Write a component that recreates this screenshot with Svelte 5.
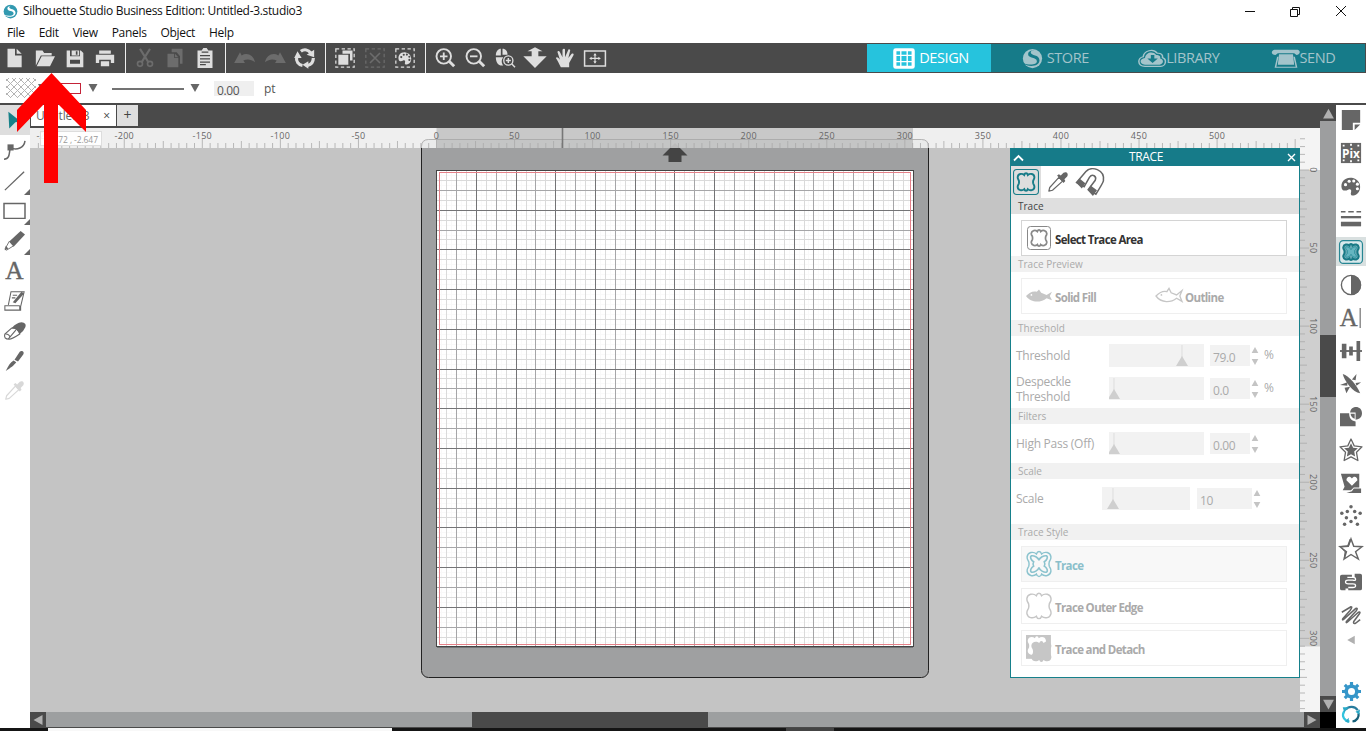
<!--
@component
Design workspace of a cutting machine editor: menu and tool bars, rulers, cutting mat
and the floating Trace panel.
-->

<script lang="ts">
	const MENUS = ['File', 'Edit', 'View', 'Panels', 'Object', 'Help'];

	const TOOL_GROUPS = [
		[{ icon: 'page' }, { icon: 'open' }, { icon: 'save' }, { icon: 'print' }],
		[{ icon: 'cut', off: true }, { icon: 'copy', off: true }, { icon: 'paste' }],
		[{ icon: 'undo', off: true }, { icon: 'redo', off: true }, { icon: 'cycle' }],
		[{ icon: 'selectAll' }, { icon: 'deselect', off: true }, { icon: 'selectColor' }],
		[{ icon: 'zoomIn' }, { icon: 'zoomOut' }, { icon: 'zoomArea' }, { icon: 'zoomDrag' }, { icon: 'hand' }, { icon: 'fit' }]
	];

	const LEFT_TOOLS = ['select', 'bezier', 'line', 'rect', 'pencil', 'text', 'sketch', 'eraser', 'knife', 'dropperOff'];
	const FLYOUTS = ['line', 'rect', 'pencil'];

	const RIGHT_TOOLS = [
		'pageSetup', 'pix', 'palette', 'lines', 'trace', 'contrast', 'textStyle', 'align', 'replicate',
		'modify', 'offset', 'library', 'stipple', 'star', 'puzzle', 'sketchPen'
	];

	const MODES = [
		{ label: 'DESIGN', icon: 'grid', width: 22 },
		{ label: 'STORE', icon: 'logo', width: 21 },
		{ label: 'LIBRARY', icon: 'cloud', width: 28 },
		{ label: 'SEND', icon: 'send', width: 28 }
	];

	const UNIT = 1.5612;
	const ORIGIN_X = 436.5;
	const ORIGIN_Y = 170;
	const MAT = 476.5;

	function ticks(from: number, to: number) {
		return Array.from({ length: (to - from) / 5 + 1 }, (_, i) => from + i * 5);
	}

	function tickSize(n: number) {
		return n % 50 === 0 ? 9 : n % 25 === 0 ? 7 : 5;
	}

	const X_TICKS = ticks(-255, 550);
	const Y_TICKS = ticks(-20, 345);
	const GRID = Array.from({ length: 97 }, (_, i) => i);

	function gridColor(i: number) {
		if (i % 8 === 0) return '#747476';
		if (i % 4 === 0) return '#a6a6a8';
		return i % 2 === 0 ? '#dadada' : '#f9f9f9';
	}

	const BUTTERFLY =
		'M12 3.2Q10.7 3.2 10.2 4.9C8 3 4 3.500 3.600 7C3.500 9 4.500 9.500 4.800 10.500Q5.200 12 4.800 13.500C4.500 14.500 3.500 15 3.600 17C4 20.500 8 21 10.200 19.100Q10.700 20.800 12 20.800Q13.300 20.800 13.800 19.100C16 21 20 20.500 20.400 17C20.500 15 19.500 14.500 19.200 13.500Q18.800 12 19.200 10.500C19.500 9.500 20.500 9 20.400 7C20 3.500 16 3 13.800 4.900Q13.300 3.200 12 3.200Z';
	const INNER =
		'M12 9.500C11.500 7.500 8.500 6 6.800 6.300 5.500 7 6.500 9.500 8.300 10.500Q7.500 12 8.300 13.500C6.500 14.500 5.500 17 6.800 17.700 8.500 18 11.500 16.500 12 14.500 12.500 16.500 15.500 18 17.200 17.700 18.500 17 17.500 14.500 15.700 13.500Q16.500 12 15.700 10.500C17.500 9.500 18.500 7 17.200 6.300 15.500 6 12.500 7.500 12 9.500Z';
	const SWIRL = '<circle cx="12" cy="12" r="11" fill="currentColor"/><path d="M17 3c-4-1-10 0-10 4 0 5 10 3 10 8 0 4-8 5-16 2 5 5 19 5 19-3 0-7-10-5-10-9 0-2 3-3 7-2Z" fill="var(--cutout)"/>';
	const PALETTE = '<path d="M13 3C5 2 0 8 2 15c1 3 5 2 7 1s4 0 3 3 1 4 4 3c8-2 9-17-3-19Z" fill="currentColor"/><g fill="var(--cutout)"><circle cx="6" cy="10.500" r="1.700"/><circle cx="10" cy="6.800" r="1.700"/><circle cx="15" cy="6.500" r="1.700"/><circle cx="19" cy="10" r="1.700"/><circle cx="19" cy="15" r="1.700"/></g>';
	const DROPPER = '<path d="M2 22l1-4L13 7l4 4L6 21Z" fill="none" stroke="currentColor" stroke-width="1.300" stroke-linejoin="round"/><path d="M11 5l2-1.500L15 5l3-3c3-2 6 1 4 4l-3 3 1 2-2 2Z" fill="currentColor"/>';

	// All glyphs are drawn in a 24 x 24 box.
	const ICONS: Record<string, string> = {
		page: '<path d="M3 1h9v8h8v14H3ZM14 1l6 6h-6Z" fill="currentColor"/>',
		open: '<path d="M1 21V3h8l2 3h9v3H7L1 21ZM8 10h16l-6 12H2Z" fill="currentColor"/>',
		save: '<path d="M2 3h4v7h12V3h1l3 3v17H2Zm4 11v5h12v-5ZM8 3h9v6H8Zm5 1v4h2V4Z" fill="currentColor" fill-rule="evenodd"/>',
		print: '<path d="M5 3h14v4H5ZM1 8h22v10h-4v-4H5v4H1ZM7 16h10v6H7Z" fill="currentColor"/>',
		cut: '<path d="M6 1l10 16M18 1L8 17" stroke="currentColor" stroke-width="2.500"/><g fill="none" stroke="currentColor" stroke-width="2"><circle cx="6" cy="19" r="3"/><circle cx="18" cy="19" r="3"/></g>',
		copy: '<path d="M3 7h8v5h5v11H3ZM12 7l4 4h-4ZM8 1h13v18h-3v-9l-4-5H8Z" fill="currentColor"/>',
		paste: '<path d="M3 3h5l2-3h4l2 3h5v21H3Z" fill="currentColor"/><path d="M6 9h12M6 13h12M6 17h12M6 20h7M8 5h8" stroke="var(--cutout)" stroke-width="1.500"/>',
		undo: '<path d="M-1 18L6 5l2 4c6-4 14-1 16 8-5-4-10-4-14-2l2 3Z" fill="currentColor"/>',
		redo: '<path d="M25 18L18 5l-2 4C10 5 2 8 0 17c5-4 10-4 14-2l-2 3Z" fill="currentColor"/>',
		cycle: '<g fill="none" stroke="currentColor" stroke-width="3.800"><path d="M7 4c4-3 9-2 12 2M22 12c0 5-3 8-7 9M9 21c-5-1-8-5-7-10"/></g><path d="M23 2v9l-9-3ZM16 16v9l-7-5ZM-1 12l4-8 5 8Z" fill="currentColor"/>',
		selectAll: '<path d="M1 1h22v22H1Z" fill="none" stroke="currentColor" stroke-width="1.500" stroke-dasharray="4 3"/><path d="M9 3h12v12h-3V7H9ZM4 8h12v12H4Z" fill="currentColor"/>',
		deselect: '<path d="M1 1h22v22H1Z" fill="none" stroke="currentColor" stroke-width="1.500" stroke-dasharray="4 3"/><path d="M6 6l12 12M18 6L6 18" stroke="currentColor" stroke-width="2"/>',
		selectColor: '<path d="M1 1h22v22H1Z" fill="none" stroke="currentColor" stroke-width="1.500" stroke-dasharray="4 3"/><g transform="translate(3 3) scale(.75)">' + PALETTE + '</g>',
		zoomIn: '<circle cx="10.500" cy="10" r="8.700" fill="none" stroke="currentColor" stroke-width="2.300"/><path d="M6 10h9M10.500 5.500v9" stroke="currentColor" stroke-width="2.200"/><path d="M17 16l6 6" stroke="currentColor" stroke-width="3.500"/>',
		zoomOut: '<circle cx="10.500" cy="10" r="8.700" fill="none" stroke="currentColor" stroke-width="2.300"/><path d="M6 10h9" stroke="currentColor" stroke-width="2.200"/><path d="M17 16l6 6" stroke="currentColor" stroke-width="3.500"/>',
		zoomArea: '<path d="M1 9C1 4 4 1 7 1v8ZM9 1c4 0 6 3 6 7H9ZM1 11h9c-3 4-2 7 0 10C4 22 1 17 1 11Z" fill="currentColor"/><circle cx="16" cy="15" r="5.500" fill="none" stroke="currentColor" stroke-width="1.600"/><path d="M13 15h6M16 12v6M20 19l4 4" stroke="currentColor" stroke-width="1.800"/>',
		zoomDrag: '<path d="M12-1l9 5h-5v6h10L12 24-2 10H8V4H3Z" fill="currentColor"/>',
		hand: '<path d="M7 23C5 19 3 15 1 12c1-2 3-1 5 2L3 5c0-2 2-2 3 0l3 6V2c1-2 3-1 3 0v9l4-9c1-1 3 0 2 2l-2 8 4-5c2-1 3 0 2 2l-5 9v5H8Z" fill="currentColor"/>',
		fit: '<path d="M-.5 3.500h25v18h-25Z" fill="none" stroke="currentColor" stroke-width="1.800"/><path d="M7 12.500h10M12 7.500v10" stroke="currentColor" stroke-width="1.400"/><path d="M12 6l2 3h-4ZM12 19l2-3h-4ZM5 12.500l3-2v4ZM19 12.500l-3-2v4Z" fill="currentColor"/>',
		grid: '<rect x="2" y="2" width="20" height="20" rx="1" fill="none" stroke="currentColor" stroke-width="3.500"/><path d="M8.500 2v20M15.500 2v20M2 8.500h20M2 15.500h20" stroke="currentColor" stroke-width="1.500"/>',
		logo: SWIRL,
		cloud: '<path d="M6 21C-1 20.500-.5 11 4.500 10 5 3 13 0 16.500 6 20 5.500 21.500 8.500 21 11c4 2 3 9.500-1.500 10Z" fill="none" stroke="currentColor" stroke-width="1.300"/><path d="M6 19C1 18.500 1 12 6 11.500 6.500 5 13 3 15.500 8c3 0 4 2 3.500 4 3.500 1 3 6.500-.5 7Z" fill="currentColor"/><path d="M11 8h3v4h3l-4.500 5L8 12h3Z" fill="var(--cutout)"/>',
		send: '<path d="M2 2h20c3 1 2 6-1 6l-2-2H5L3 8C-1 8-1 3 2 2Z" fill="currentColor"/><path d="M6 7h12l1 12H5Z" fill="currentColor"/><path d="M5 10L3 22h18l-2-12" fill="none" stroke="currentColor" stroke-width="1.300"/>',
		select: '<path d="M5 2l14 11-6 1-7 7Z" fill="#178189"/>',
		bezier: '<path d="M0 22c6 0 6-5 7-13 8 3 16 0 17-8" fill="none" stroke="currentColor" stroke-width="1.700"/><path d="M4 5h7v7H4Z" fill="currentColor"/>',
		line: '<path d="M1 23L23 2" stroke="currentColor" stroke-width="1.500"/>',
		rect: '<path d="M0 4h24v17H0Z" fill="none" stroke="currentColor" stroke-width="1.700"/>',
		pencil: '<path d="M6 13L19 1l5 4-13 14Z" fill="currentColor"/><path d="M6 13l5 5-8 5-2-1Z" fill="none" stroke="currentColor"/><path d="M1 23l1-5 3 3Z" fill="currentColor"/>',
		text: '<text x="12" y="22" text-anchor="middle" font-family="Liberation Serif, serif" font-size="29" fill="currentColor" stroke="currentColor" stroke-width=".5">A</text>',
		sketch: '<path d="M5 17l3-15h15l-4 17v4H1v-5h17M18 23v-5M10 6h5M9 9h4" fill="none" stroke="currentColor" stroke-width="1.200"/><path d="M10 14l10-12 3 2-10 11Z" fill="currentColor"/>',
		eraser: '<path d="M9 9Q14 3 20 2.500 26 3 24.500 8 23 12 18 16 16 10 9 9Z" fill="currentColor"/><path d="M9 9L1 16Q-1 22 6 22 9 22 18 16 16 9 9 9M13.500 11.500L5 21.500M2 16q4 0 5 4" fill="none" stroke="currentColor" stroke-width="1.300"/>',
		knife: '<path d="M12 11l6-9c2-2 6 0 4 3l-6 8ZM11 12l3 2c-3 4-6 6-12 10 3-6 5-10 9-12Z" fill="currentColor"/>',
		dropperOff: '<g opacity=".25">' + DROPPER + '</g>',
		dropper: DROPPER,
		magnet: '<path d="M.5 12.500L8.500 3C13-2 25 1 23.500 11Q23 13 17 22.500L10.500 18.500 16.500 10.500C18 7 14 4.500 11.500 8L7 16Z" fill="none" stroke="currentColor" stroke-width="1.300"/><path d="M0 12.500L3 9l5 4-3 4.500ZM10 19l2.500-4 5.500 4-3.500 5Z" fill="currentColor"/>',
		pageSetup: '<path d="M2 1h20v14h-8v8H2ZM16 17h6l-6 6Z" fill="currentColor"/>',
		pix: '<path d="M1 1h22v22H1Z" fill="currentColor"/><path d="M3 3h2v2H3zM11 2h2v2h-2zM19 3h2v2h-2zM3 19h2v2H3zM11 20h2v2h-2zM19 19h2v2h-2z" fill="#fff"/><text x="12" y="17" text-anchor="middle" font-family="Open Sans, sans-serif" font-size="13" font-weight="700" fill="#fff">Pix</text>',
		palette: PALETTE,
		lines: '<path d="M1 4h5M9 4h6M18 4h5" stroke="currentColor" stroke-width="1.600"/><path d="M1 10h22" stroke="currentColor" stroke-width="2.500"/><path d="M1 17.500h22" stroke="currentColor" stroke-width="5"/>',
		trace: `<rect x="-.5" y="-.5" width="25" height="25" rx="4" fill="#d9e9ec" stroke="#278693" stroke-width="1.300"/><path d="${BUTTERFLY}" fill="#68aab5" stroke="#187985" stroke-width="2.200"/><path d="${INNER}" fill="#65b5c0" stroke="#2f929e" stroke-width="1"/>`,
		contrast: '<circle cx="12" cy="12" r="10.500" fill="none" stroke="currentColor" stroke-width="1.500"/><path d="M12 1a11 11 0 0 1 0 22Z" fill="currentColor"/>',
		textStyle: '<text x="9.500" y="21" text-anchor="middle" font-family="Liberation Serif, serif" font-size="27" fill="currentColor" stroke="currentColor" stroke-width=".4">A</text><path d="M22 1v22" stroke="currentColor" stroke-width="1.200"/>',
		align: '<path d="M0 12h24" stroke="currentColor" stroke-width="2"/><path d="M2 4h5v16H2ZM10 7h4v10h-4ZM18 1h4v22h-4Z" fill="currentColor"/>',
		replicate: '<path d="M3 1C10 3 19 14 22 22 14 21 5 9 3 1Z" fill="currentColor"/><path d="M13 7l5-6-1 7ZM17 11l6-1-5 4ZM8 10L0 13l8 1ZM11 15l-4 7-2-6Z" fill="currentColor"/>',
		modify: '<path d="M0 8h10c0 5 2 8 7 9v5H0Z" fill="currentColor"/><path d="M11 7c1-8 13-8 13 1 0 5-4 7-7 7V7Z" fill="currentColor"/><path d="M11.500 8.500H16V14c-3-1-4-3-4.500-5.500Z" fill="currentColor"/>',
		offset: '<path d="M12 0l3.500 7.500 8.500 1-6 6 1.500 9L12 19.500 4.500 23.500 6 14.500 0 8.500l8.500-1Z" fill="none" stroke="currentColor" stroke-width="1.400" stroke-linejoin="round"/><path d="M12 4.500l2.300 5 5.200.700-4 3.500 1 5.300L12 16.500 7.500 19l1-5.300-4-3.500 5.200-.700Z" fill="currentColor"/>',
		library: '<path d="M1 2h20v15h-6l-3 3H3l2-4Z" fill="currentColor"/><path d="M15 18h8v5H7l6-2Z" fill="currentColor"/><path d="M13 15L7 9c0-4 4-5 6-2 2-3 6-2 6 2Z" fill="#fff"/>',
		stipple: '<g fill="currentColor"><circle cx="12" cy="2" r="1.900"/><circle cx="2" cy="9" r="1.900"/><circle cx="8" cy="7" r="1.900"/><circle cx="16" cy="7" r="1.900"/><circle cx="22" cy="9" r="1.900"/><circle cx="7" cy="14" r="1.900"/><circle cx="17" cy="14" r="1.900"/><circle cx="12" cy="18" r="1.900"/><circle cx="5" cy="21" r="1.900"/><circle cx="19" cy="21" r="1.900"/></g>',
		star: '<path d="M12 1l3 8 9 .5-7 5.500 3 8-8-5-7.500 5L7 15 0 9.500 9 9Z" fill="none" stroke="currentColor" stroke-width="1.600"/><path d="M10.500 1h2L9.500 9.500 0 10l7 5-2 8-1-1 1-7-6-6 9-1Z" fill="currentColor"/>',
		puzzle: '<path d="M2 4h11v3h3V3h6q2 0 2 2v14q0 2-2 2H9v-2H6v2H2q-2 0-2-2V6q0-2 2-2Z" fill="currentColor"/><path d="M8 7h6q3 0 3 2t-3 1H9q-3 0-3 2t3 2h5q3 0 3 2t-3 2H9" fill="none" stroke="#fff" stroke-width="1.400"/>',
		sketchPen: '<path d="M2 9L12 3Q14 3 11 7L3 16Q2 19 6 15L17 5Q20 4 18 7L7 19Q6 22 10 18L20 9Q23 8 21 11L15 19Q14 22 17 21L22 17" fill="none" stroke="currentColor" stroke-width="1.700" stroke-linejoin="round"/>',
		gear: '<circle cx="12" cy="12" r="6.700" fill="none" stroke="#3696c9" stroke-width="4.500"/><path d="M12 0v5M12 19v5M0 12h5M19 12h5M3.500 3.500l3.500 3.500M17 17l3.500 3.500M20.500 3.500L17 7M7 17l-3.500 3.500" stroke="#3696c9" stroke-width="4"/>',
		sync: '<path d="M5 6c4-5 12-5 16 1" fill="none" stroke="#287c9e" stroke-width="3"/><path d="M3 8c-4 7 0 13 7 14" fill="none" stroke="#31c4df" stroke-width="3"/><path d="M14 22c6-1 9-6 8-11" fill="none" stroke="#155f78" stroke-width="3"/><path d="M1 3h8l-6 7ZM9 17v7l-5-2ZM24 6l-1 7-5-4Z" fill="#2aa9c7"/>',
		traceTab: `<rect x=".5" y=".5" width="23" height="23" rx="3" fill="none" stroke="currentColor" stroke-width="1"/><path d="${BUTTERFLY}" transform="translate(1 1) scale(.92)" fill="none" stroke="currentColor" stroke-width="1.900"/>`,
		fish: '<path d="M0 12c3-3 6-5 10-4l2-2 2 3 5 2 5-3-2 4 2 4-5-2c-5 4-14 5-19-2Z" fill="currentColor"/><circle cx="5" cy="11" r=".8" fill="#fff"/>',
		fishLine: '<path d="M0 12c3-3 6-5 10-4l2-3 2 4 5 2 5-4-2 5 2 5-5-3c-5 4-14 5-19-2Z" fill="none" stroke="currentColor" stroke-width="1.200"/><circle cx="5" cy="11" r=".8" fill="currentColor"/>',
		traceStyle: `<path d="${BUTTERFLY}" transform="translate(-3.700 -3.700) scale(1.310)" fill="none" stroke="currentColor" stroke-width="1"/><path d="${INNER}" transform="translate(-4 -4) scale(1.330)" fill="none" stroke="currentColor" stroke-width="1.100"/>`,
		outer: `<path d="${BUTTERFLY}" transform="translate(-4 -4) scale(1.330)" fill="none" stroke="currentColor" stroke-width="1"/>`,
		detach: `<path d="M0 0h23v22H0Z" fill="currentColor"/><path d="${BUTTERFLY}" transform="translate(-2 -2)" fill="#fff"/><path d="${BUTTERFLY}" transform="translate(1 2) scale(1.100)" fill="currentColor"/>`,
		up: '<path d="M12 3l10 18H2Z" fill="currentColor"/>',
		down: '<path d="M2 3h20L12 21Z" fill="currentColor"/>',
		left: '<path d="M3 12L21 2v20Z" fill="currentColor"/>',
		right: '<path d="M21 12L3 2v20Z" fill="currentColor"/>'
	};
</script>

{#snippet icon(name: string, size: number)}
	<svg class="icon" viewBox="0 0 24 24" width={size} height={size}>{@html ICONS[name]}</svg>
{/snippet}

{#snippet slider(label: string, value: string, knob: number, unit = '', wide = false)}
	<div class="setting" class:wide>
		<span class="setting-label">{label}</span>
		<svg class="slider" viewBox={wide ? '0 0 88 23' : '0 0 95 23'}>
			<path d="M{knob} 1v12" stroke="#ddd" />
			<path d="M{knob} 12l6 10h-12Z" fill="#cfcfcf" />
		</svg>
		<span class="field">{value}</span>
		<span class="spinner">{@render icon('up', 8)}{@render icon('down', 8)}</span>
		<span class="unit">{unit}</span>
	</div>
{/snippet}

<div class="window">
	<header class="titlebar">
		<span class="app-logo">{@render icon('logo', 15)}</span>
		<span class="title">Silhouette Studio Business Edition: Untitled-3.studio3</span>
		<svg class="controls" width="110" height="22" viewBox="0 0 110 22" fill="none" stroke="#111">
			<path d="M1 10.500h10M46.500 8.500h7v7h-7ZM48.500 8.500v-2h7v7h-2M92 5l10 10M102 5L92 15" />
		</svg>
	</header>

	<nav class="menubar">
		{#each MENUS as menu}<span>{menu}</span>{/each}
	</nav>

	<div class="toolbar">
		{#each TOOL_GROUPS as group}
			<div class="group">
				{#each group as tool}
					<span class="tool" class:off={tool.off}>{@render icon(tool.icon, 20)}</span>
				{/each}
			</div>
		{/each}
		<div class="modes">
			{#each MODES as mode, i}
				<span class="mode" class:active={i === 0} class:tight={i > 1}>
					<svg class="icon" viewBox="0 0 24 24" width={mode.width} height="21" preserveAspectRatio="none">{@html ICONS[mode.icon]}</svg>
					{mode.label}
				</span>
			{/each}
		</div>
	</div>

	<div class="options">
		<svg width="205" height="30" viewBox="0 0 205 30">
			<defs>
				<pattern id="hatch" width="7" height="7" patternUnits="userSpaceOnUse">
					<path d="M0 0l7 7M7 0L0 7" stroke="#b4b4b4" />
				</pattern>
			</defs>
			<rect x="6" y="5" width="30" height="20" fill="url(#hatch)" />
			<path d="M38 11h9l-4.500 8ZM88.500 11h9L93 19ZM190.500 11h9L195 19Z" fill="#666" />
			<rect x="52.500" y="10.500" width="28" height="10" fill="none" stroke="#c42338" />
			<path d="M112 16h72" stroke="#444" stroke-width="1.600" />
		</svg>
		<span class="width-field">0.00</span>
		<span class="pt">pt</span>
	</div>

	<main class="workspace">
		<aside class="left-tools">
			{#each LEFT_TOOLS as tool, i}
				<span class="left-tool" class:active={i === 0}>
					{@render icon(tool, 21)}
					{#if FLYOUTS.includes(tool)}<i class="flyout"></i>{/if}
				</span>
			{/each}
		</aside>

		<section class="center">
			<div class="tabs">
				<div class="tab">Untitled-3 <b>×</b></div>
				<div class="tab-add">+</div>
			</div>

			<svg class="canvas" viewBox="30 128 1290 584" width="1290" height="584">
				<rect x="421.500" y="139.500" width="507" height="538" rx="7" fill="#9fa0a1" stroke="#222" />
				<rect x={ORIGIN_X} y={ORIGIN_Y + 0.5} width={MAT} height="476" fill="#fff" />
				<g shape-rendering="crispEdges">
					{#each [1, 2, 4, 8] as level}
						{#each GRID.filter((i) => i % level === 0 && (level === 8 || i % (level * 2) !== 0)) as i}
							{@const POS = (i * MAT) / 96}
							<path d="M{ORIGIN_X + POS + 0.2} 171V646M437 {ORIGIN_Y + 0.5 + POS}H913" stroke={gridColor(i)} />
						{/each}
					{/each}
				</g>
				<rect x={ORIGIN_X} y={ORIGIN_Y + 0.5} width={MAT + 0.5} height="476" fill="none" stroke="#444" />
				<rect x="439.500" y="172.500" width="471" height="472" fill="none" stroke="#e58088" />
				<path d="M675 143l12.500 12.500h-6v6.500h-13v-6.500h-6Z" fill="#444" />

				<rect x="30" y="128" width="1270" height="20" fill="#f5f5f5" fill-opacity=".88" />
				<rect x={ORIGIN_X} y="128" width={MAT} height="20" fill="#000" fill-opacity=".16" />
				<path d="M421.500 148v-1.500q0-7 7-7h493q7 0 7 7v1.500" fill="none" stroke="#aaa" stroke-width=".8" />
				<g class="ruler">
					{#each X_TICKS as n}
						{@const X = ORIGIN_X + n * UNIT}
						<path d="M{X} 148v-{tickSize(n)}" />
						{#if n % 50 === 0 && n < 550}<text x={X} y="139">{n}</text>{/if}
					{/each}
				</g>
				<path d="M562.500 128v20" stroke="#777" stroke-width="1.600" />

				<rect x="1300" y="128" width="20" height="584" fill="#f4f4f4" />
				<rect x="1300" y={ORIGIN_Y} width="20" height={MAT} fill="#cfcfcf" />
				<g class="ruler">
					{#each Y_TICKS as n}
						{@const Y = ORIGIN_Y + n * UNIT}
						<path d="M1300 {Y}h{tickSize(n)}" />
						{#if n % 50 === 0}<text transform="translate(1309.500 {Y}) rotate(90)">{n}</text>{/if}
					{/each}
				</g>

				<rect x="40.500" y="131.500" width="61" height="14" fill="#fff" fill-opacity=".92" stroke="#ddd" />
				<text class="coords" x="44" y="143" textLength="54">-9.172 , -2.647</text>
			</svg>

			<div class="hscroll">
				<span class="arrow">{@render icon('left', 12)}</span>
				<span class="track"><i></i></span>
				<span class="arrow">{@render icon('right', 12)}</span>
			</div>

			<div class="panel">
				<div class="panel-title">
					<svg width="11" height="8" viewBox="0 0 11 8"><path d="M1 6.500l4.500-4.500L10 6.500" fill="none" stroke="#fff" stroke-width="1.800" /></svg>
					<span>TRACE</span>
					<svg width="9" height="9" viewBox="0 0 9 9"><path d="M1 1l7 7M8 1L1 8" stroke="#fff" stroke-width="1.400" /></svg>
				</div>
				<div class="panel-tabs">
					<span class="panel-tab active">{@render icon('traceTab', 26)}</span>
					<span class="panel-tab">{@render icon('dropper', 22)}</span>
					<span class="panel-tab">{@render icon('magnet', 28)}</span>
				</div>
				<h2 class="on">Trace</h2>
				<div class="box area">{@render icon('traceTab', 24)}<b>Select Trace Area</b></div>
				<h2>Trace Preview</h2>
				<div class="box preview">
					<span>{@render icon('fish', 26)}<b>Solid Fill</b></span>
					<span>{@render icon('fishLine', 26)}<b>Outline</b></span>
				</div>
				<h2 class="spaced">Threshold</h2>
				<div class="settings pair">
					{@render slider('Threshold', '79.0', 73, '%')}
					{@render slider('Despeckle Threshold', '0.0', 5, '%')}
				</div>
				<h2>Filters</h2>
				<div class="settings single">{@render slider('High Pass (Off)', '0.00', 5)}</div>
				<h2>Scale</h2>
				<div class="settings scale">{@render slider('Scale', '10', 11, '', true)}</div>
				<h2>Trace Style</h2>
				<div class="box chosen">{@render icon('traceStyle', 26)}<b>Trace</b></div>
				<div class="box">{@render icon('outer', 26)}<b>Trace Outer Edge</b></div>
				<div class="box">{@render icon('detach', 26)}<b>Trace and Detach</b></div>
			</div>
		</section>

		<div class="vscroll">
			<span class="arrow">{@render icon('up', 13)}</span>
			<span class="track"><i></i></span>
			<span class="arrow">{@render icon('down', 13)}</span>
			<span class="corner"></span>
		</div>

		<aside class="right-tools">
			{#each RIGHT_TOOLS as tool}
				<span class="right-tool" class:active={tool === 'trace'}>{@render icon(tool, 22)}</span>
			{/each}
			<span class="collapse">{@render icon('left', 10)}</span>
			<span class="gear">{@render icon('gear', 19)}</span>
			<span class="sync">{@render icon('sync', 18)}</span>
		</aside>
	</main>

	<footer class="taskbar"><i></i><i></i></footer>

	<svg class="pointer" width="70" height="110" viewBox="0 0 70 110">
		<path d="M34.500 0L69 37v22L41 31v79H27V31L0 59V37Z" fill="#f00" />
	</svg>
</div>

<style>
	:global(body) {
		margin: 0;
		overflow: hidden;
	}

	.window {
		--cutout: #4a4a4a;
		position: relative;
		display: flex;
		flex-direction: column;
		width: 1366px;
		height: 731px;
		overflow: hidden;
		background: #fff;
		color: #111;
		font: 12px/1.2 'Open Sans', 'Noto Sans', sans-serif;
	}

	.icon {
		display: block;
		flex: none;
		overflow: visible;
	}

	.titlebar {
		display: flex;
		align-items: center;
		height: 23px;
		padding-left: 3px;
	}

	.app-logo {
		--cutout: #fff;
		color: #3199b0;
	}

	.title {
		margin-left: 5px;
		font-size: 12px;
		letter-spacing: -0.33px;
	}

	.controls {
		margin: 0 12px 0 auto;
	}

	.menubar {
		display: flex;
		gap: 14px;
		align-items: center;
		box-sizing: border-box;
		height: 20px;
		padding-left: 7px;
		letter-spacing: -0.32px;
	}

	.toolbar {
		display: flex;
		flex: none;
		height: 30px;
		background: #4a4a4a;
	}

	.group {
		display: flex;
		padding-right: 5px;
	}

	.group + .group {
		padding-left: 4px;
		border-left: 1px solid #eee;
	}

	.tool {
		display: grid;
		place-items: center;
		width: 30px;
		color: #dedede;
	}

	.tool.off {
		color: #6c6c6c;
	}

	.modes {
		display: flex;
		width: 498px;
		height: 28px;
		margin: 1px 1px 0 auto;
	}

	.mode {
		--cutout: #167b89;
		display: flex;
		gap: 4px;
		align-items: center;
		justify-content: center;
		box-sizing: border-box;
		width: 124.6px;
		padding-left: 4px;
		background: #167b89;
		color: #a3c4cb;
		font-size: 14.5px;
		letter-spacing: -0.4px;
	}

	.mode.active {
		width: 124px;
		background: #26c3dd;
		color: #fff;
	}

	.mode.tight {
		gap: 0;
		padding-left: 2px;
	}

	.options {
		display: flex;
		flex: none;
		height: 30px;
		color: #555;
	}

	.width-field {
		width: 37px;
		height: 15px;
		margin: 8px 0 0 9px;
		padding-left: 3px;
		background: #efefef;
		line-height: 19px;
		letter-spacing: -0.4px;
	}

	.pt {
		margin: 9px 0 0 10px;
	}

	.workspace {
		display: flex;
		flex: none;
		box-sizing: border-box;
		height: 625px;
		border-top: 2px solid #4a4a4a;
	}

	.left-tools {
		width: 30px;
		background: #fff;
		color: #666;
	}

	.left-tool {
		position: relative;
		display: grid;
		place-items: center;
		height: 30px;
		padding-right: 1px;
	}

	.left-tool.active {
		background: #dedede;
	}

	.flyout {
		position: absolute;
		right: 0;
		bottom: 0;
		border: 3px solid transparent;
		border-right-color: #666;
		border-bottom-color: #666;
	}

	.center {
		position: relative;
		width: 1290px;
		background: #c4c4c4;
	}

	.tabs {
		display: flex;
		gap: 1px;
		height: 23px;
		padding-left: 1px;
		background: #4a4a4a;
	}

	.tab {
		display: flex;
		justify-content: space-between;
		box-sizing: border-box;
		width: 85px;
		height: 21px;
		padding: 0 6px 0 5px;
		background: #fff;
		color: #666;
		line-height: 21px;
		letter-spacing: -0.2px;
	}

	.tab b {
		color: #444;
		font-weight: 400;
	}

	.tab-add {
		width: 21px;
		height: 21px;
		background: #dfdfdf;
		color: #444;
		font-size: 14px;
		line-height: 20px;
		text-align: center;
	}

	.canvas {
		display: block;
	}

	.ruler path {
		stroke: #aaa;
		stroke-width: 0.8;
	}

	.ruler text {
		fill: #666;
		font-size: 9px;
		letter-spacing: 0.3px;
		text-anchor: middle;
	}

	.coords {
		fill: #999;
		font-size: 8.5px;
	}

	.hscroll {
		display: flex;
		box-sizing: border-box;
		height: 16px;
		border-bottom: 1px solid #4a4a4a;
		background: #4a4a4a;
	}

	.arrow {
		display: grid;
		flex: none;
		place-items: center;
		width: 16px;
		height: 16px;
		background: #4a4a4a;
		color: #b0b0b0;
	}

	.hscroll .track {
		flex: 1;
		background: #9d9fa0;
	}

	.hscroll .track i {
		display: block;
		width: 236px;
		height: 100%;
		margin-left: 426px;
		background: #4a4a4a;
	}

	.vscroll {
		display: flex;
		flex-direction: column;
		width: 16px;
		background: #4a4a4a;
	}

	.vscroll .track {
		height: 575px;
		background: #9d9e9f;
	}

	.vscroll .track i {
		display: block;
		height: 62px;
		margin-top: 214px;
		background: #4a4a4a;
	}

	.corner {
		height: 16px;
		background: #000;
	}

	.right-tools {
		--cutout: #fff;
		width: 30px;
		background: #fff;
		color: #666;
	}

	.right-tool {
		display: grid;
		place-items: center;
		height: 29px;
		margin-bottom: 4px;
	}

	.right-tool.active {
		background: #d9e0e0;
	}

	.collapse,
	.gear,
	.sync {
		display: grid;
		place-items: center;
		height: 20px;
		color: #b0b0b0;
	}

	.collapse {
		height: 14px;
	}

	.gear {
		margin-top: 34px;
	}

	.sync {
		height: 26px;
	}

	.taskbar {
		display: flex;
		flex: none;
		height: 3px;
		background: #151515;
	}

	.taskbar i {
		width: 344px;
		margin-left: 48px;
		background: #f8f8f8;
	}

	.taskbar i + i {
		width: 48px;
		margin-left: 394px;
		background: #444;
	}

	.panel {
		position: absolute;
		top: 43px;
		left: 980px;
		box-sizing: border-box;
		width: 290px;
		height: 530px;
		border: 1px solid #16808b;
		background: #fff;
		color: #aaa;
	}

	.panel-title {
		display: flex;
		align-items: center;
		justify-content: space-between;
		height: 17px;
		padding: 0 3px 0 2px;
		background: #167b89;
		color: #fff;
		letter-spacing: -0.4px;
	}

	.panel-title span {
		margin-right: 19px;
	}

	.panel-tabs {
		display: flex;
		height: 32px;
		color: #666;
	}

	.panel-tab {
		display: grid;
		place-items: center;
		width: 32px;
	}

	.panel-tab.active {
		width: 30px;
		margin-right: 1px;
		background: #dedede;
		color: #187c88;
	}

	h2 {
		height: 16px;
		margin: 0;
		padding-left: 7px;
		background: #f1f1f1;
		font-size: 10px;
		font-weight: 400;
		line-height: 17px;
	}

	h2.on {
		background: #dfdfdf;
		color: #444;
	}

	h2.spaced {
		margin-top: 6px;
	}

	.box {
		display: flex;
		gap: 3px;
		align-items: center;
		box-sizing: border-box;
		width: 266px;
		height: 36px;
		margin: 6px 0 0 10px;
		padding-left: 4px;
		border: 1px solid #efefef;
		color: #c6c6c6;
	}

	.box b {
		padding-top: 4px;
		color: #aaa;
		font-size: 11.5px;
		font-weight: 700;
		letter-spacing: -0.65px;
	}

	.area {
		gap: 4px;
		padding-left: 5px;
		border-color: #d4d4d4;
		color: #888;
	}

	.area b {
		color: #333;
	}

	.preview {
		gap: 0;
	}

	.preview span {
		display: flex;
		gap: 3px;
		align-items: center;
		width: 133px;
	}

	.chosen {
		background: #f8f8f8;
		color: #8bc3ce;
	}

	.chosen b {
		color: #8bbfca;
	}

	.settings {
		box-sizing: border-box;
		height: 39px;
		padding-top: 3px;
	}

	.settings.pair {
		height: 72px;
	}

	.settings.scale {
		height: 45px;
	}

	.setting {
		display: flex;
		align-items: center;
		height: 33px;
		padding-left: 5px;
	}

	.setting-label {
		width: 93px;
		line-height: 15px;
		letter-spacing: -0.25px;
	}

	.slider {
		width: 95px;
		height: 23px;
		background: #f2f2f2;
	}

	.field {
		box-sizing: border-box;
		width: 40px;
		height: 21px;
		margin: 0 1px 0 6px;
		padding-left: 3px;
		background: #f2f2f2;
		line-height: 25px;
		letter-spacing: -0.4px;
	}

	.spinner {
		display: grid;
		gap: 4px;
		width: 13px;
		color: #c4c4c4;
	}

	.wide .setting-label {
		width: 86px;
	}

	.wide .slider {
		width: 88px;
	}

	.wide .field {
		width: 55px;
		margin-left: 7px;
	}

	.pointer {
		position: absolute;
		top: 73px;
		left: 17px;
	}
</style>
